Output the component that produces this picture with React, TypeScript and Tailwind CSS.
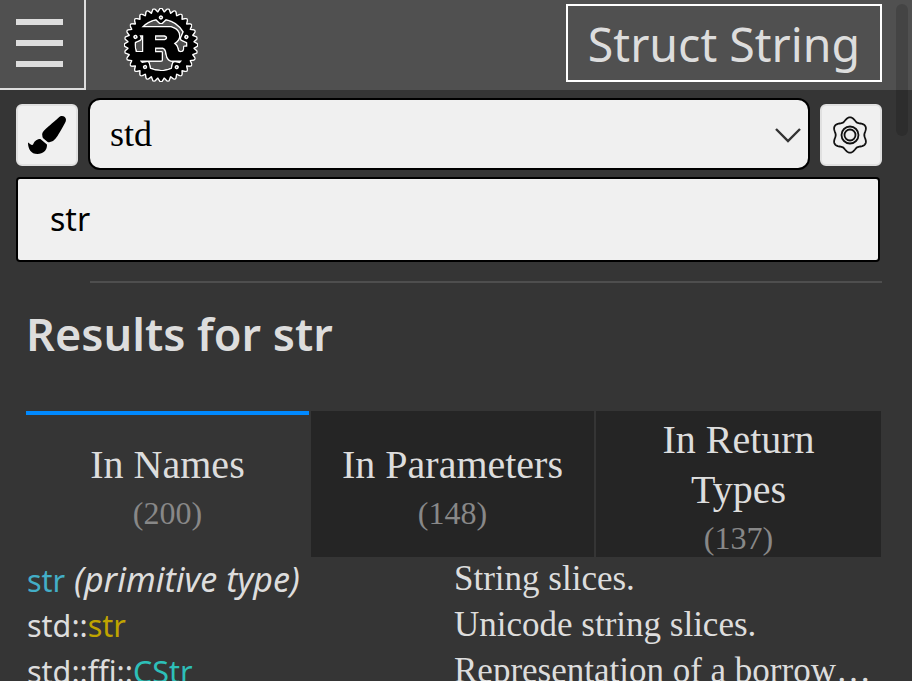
import React from "react";
import { FaPaintBrush } from "react-icons/fa";
import { SiRust } from "react-icons/si";

const sans = "font-['Noto_Sans',sans-serif]";
const serif = "font-['Liberation_Serif',serif]";

// six soft lobes, like rustdoc's wheel icon
const wheelPath = () => {
  const pts: string[] = [];
  for (let i = 0; i <= 120; i++) {
    const a = (i / 120) * Math.PI * 2 - Math.PI / 2;
    const r = 16 + 1.7 * Math.cos(6 * a + Math.PI * 3);
    pts.push(`${(20 + r * Math.cos(a)).toFixed(2)} ${(20 + r * Math.sin(a)).toFixed(2)}`);
  }
  return "M" + pts.join("L") + "Z";
};

const tabs = [
  { label: "In Names", count: "(200)", active: true },
  { label: "In Parameters", count: "(148)" },
  { label: "In Return Types", count: "(137)" },
];

const rows = [
  {
    path: "",
    name: "str",
    color: "text-[#43aec7]",
    suffix: " (primitive type)",
    desc: "String slices.",
  },
  { path: "std::", name: "str", color: "text-[#c0a400]", desc: "Unicode string slices." },
  {
    path: "std::ffi::",
    name: "CStr",
    color: "text-[#2dbfb8]",
    desc: "Representation of a borrowed C string.",
  },
];

const App = () => {
  return (
    <div className="relative h-[681px] w-[912px] overflow-hidden bg-[#353535] text-[#ddd]">
      {/* top bar */}
      <div className="flex h-[90px] items-center bg-[#505050]">
        <button className="flex h-[90px] w-[86px] flex-col items-center justify-center gap-[15px] border-r-2 border-b-2 border-[#ddd] pb-[3px] pr-[6px]">
          <span className="h-[6px] w-[47px] bg-[#ddd]" />
          <span className="h-[6px] w-[47px] bg-[#ddd]" />
          <span className="h-[6px] w-[47px] bg-[#ddd]" />
        </button>
        <SiRust className="ml-[39px] size-[72px] text-black [filter:drop-shadow(1px_0_0_#fff)_drop-shadow(0_1px_0_#fff)_drop-shadow(-1px_0_0_#fff)_drop-shadow(0_-1px_0_#fff)]" />
        <div
          className={`mt-[-4px] ml-auto mr-[30px] flex h-[78px] w-[316px] items-center justify-center border-2 border-white pt-[3px] text-[46.5px] text-[#ddd] ${sans}`}
        >
          Struct String
        </div>
      </div>

      {/* search controls */}
      <div className="flex h-[87px] items-center gap-[10px] pl-[16px] pr-[30px] pt-[1px]">
        <button className="mt-[2px] flex size-[62px] items-center justify-center rounded-[6px] border-2 border-[#e0e0e0] bg-[#f0f0f0]">
          <FaPaintBrush className="size-[38px] text-black" />
        </button>
        <div
          className={`flex h-[72px] w-[722px] items-center justify-between rounded-[12px] border-2 border-black bg-[#f0f0f0] pl-[20px] pr-[7px] text-[36px] text-black ${serif}`}
        >
          std
          <svg viewBox="0 0 26 16" className="mt-[2px] h-[16px] w-[26px]" fill="none" stroke="#333" strokeWidth="2.4">
            <path d="M1 2l12 12L25 2" />
          </svg>
        </div>
        <button className="mt-[2px] flex size-[62px] items-center justify-center rounded-[6px] border-2 border-[#e0e0e0] bg-[#f0f0f0]">
          <svg viewBox="0 0 40 40" className="mr-[3px] size-[40px]" fill="none" stroke="#111" strokeWidth="1.8">
            <path d={wheelPath()} />
            <circle cx="20" cy="20" r="8.5" />
            <circle cx="20" cy="20" r="5.5" />
          </svg>
        </button>
      </div>
      <div className="pl-[16px] pr-[32px]">
        <div
          className={`flex h-[85px] items-center rounded-[4px] border-2 border-black bg-[#f0f0f0] pb-[2px] pl-[32px] text-[32px] text-black ${sans}`}
        >
          str
        </div>
      </div>

      <div className="ml-[90px] mr-[30px] mt-[19px] border-t-2 border-[#4e4e4e]" />

      <h1 className={`ml-[26px] mt-[21px] text-[45px] leading-[60px] font-semibold text-[#ddd] ${sans}`}>
        Results for str
      </h1>

      {/* tabs */}
      <div className={`ml-[26px] mt-[47px] grid h-[146px] w-[855px] grid-cols-[283px_283px_285px] gap-[2px] text-[40px] ${serif}`}>
        {tabs.map((t) => (
          <div
            key={t.label}
            className={`flex flex-col items-center justify-center overflow-hidden px-[22px] text-center leading-[50px] ${
              t.active ? "border-t-4 border-[#0089ff] pt-[4px]" : "bg-[#252525] pt-[8px]"
            }`}
          >
            <span>{t.label}</span>
            <span className="text-[32px] leading-[47px] text-[#888]">{t.count}</span>
          </div>
        ))}
      </div>

      {/* results */}
      <div className="ml-[27px] mt-[-1px] w-[855px]">
        {rows.map((r) => (
          <div key={r.desc} className="grid h-[46px] grid-cols-[427px_418px] items-center text-[30.5px] leading-[46px]">
            <span className={`${sans} h-[46px] whitespace-pre text-[#ddd]`}>
              {r.path}
              <span className={r.color}>{r.name}</span>
              {r.suffix && <i className="text-[34px] leading-[46px]">{r.suffix}</i>}
            </span>
            <span className={`${serif} truncate text-[35px] text-[#ddd]`}>{r.desc}</span>
          </div>
        ))}
      </div>

      {/* overlay scrollbar */}
      <div className="absolute right-[4px] top-[4px] h-[132px] w-[12px] rounded-full bg-black/15" />
    </div>
  );
};

export default App;
